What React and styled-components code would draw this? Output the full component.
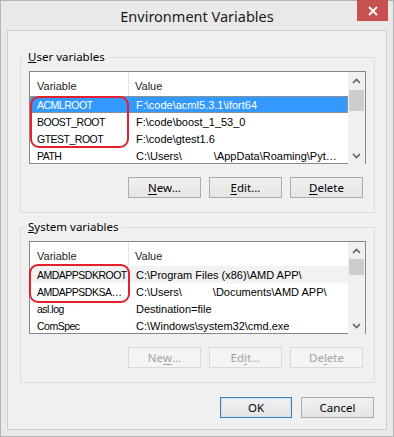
import React from "react";
import styled, { createGlobalStyle } from "styled-components";

const Global = createGlobalStyle`
  html, body { margin: 0; padding: 0; background: #fff; }
  * { box-sizing: border-box; }
`;

const uiFont = `"Noto Sans", "Open Sans", sans-serif`;
const listFont = `"Liberation Sans", Arial, sans-serif`;

const Window = styled.div`
  width: 394px;
  height: 437px;
  background: #e9e9e9;
  border: 1px solid #b4b4b4;
  display: flex;
  flex-direction: column;
  padding: 0 6px 6px 6px;
  font-family: ${uiFont};
`;

const TitleBar = styled.div`
  position: relative;
  height: 29px;
  flex: none;
  display: flex;
  align-items: center;
  justify-content: center;
  font-size: 14.5px;
  color: #1a1a1a;
  padding-top: 1px;
`;

const CloseButton = styled.div`
  position: absolute;
  top: -1px;
  right: -1px;
  width: 31px;
  height: 21px;
  background: #c75050;
  display: flex;
  align-items: center;
  justify-content: center;
`;

const Body = styled.div`
  flex: 1;
  background: #f0f0f0;
  border: 1px solid #cfcfcf;
  display: flex;
  flex-direction: column;
  padding: 18px 11px 11px 12px;
`;

const Group = styled.fieldset`
  margin: 0 0 6px 0;
  padding: 6px 8px 14px 8px;
  border: 1px solid #dcdcdc;
  min-width: 0;
`;

const Legend = styled.legend`
  font-size: 11.5px;
  color: #000;
  padding: 0 3px;
  margin-left: -4px;
  line-height: 16px;
`;

const ListBox = styled.div`
  position: relative;
  height: 93px;
  border: 1px solid #828790;
  background: #fff;
  display: grid;
  grid-template-columns: 1fr 17px;
  font-family: ${listFont};
  font-size: 11px;
  color: #000;
`;

const Rows = styled.div`
  display: flex;
  flex-direction: column;
  min-width: 0;
`;

const Header = styled.div`
  height: 24px;
  display: grid;
  grid-template-columns: 99px 1fr;
  flex: none;
`;

const HeadCell = styled.div`
  display: flex;
  align-items: center;
  padding-left: ${(p) => (p.$first ? 7 : 6)}px;
  border-right: ${(p) => (p.$first ? "1px solid #e5e5e5" : "none")};
  color: #1e1e1e;
  padding-top: 4px;
`;

const Row = styled.div`
  height: 17px;
  flex: none;
  display: grid;
  grid-template-columns: 99px 1fr;
  align-items: center;
  background: ${(p) => (p.$selected ? "#3399ff" : p.$hover ? "#f2f2f2" : "transparent")};
  color: ${(p) => (p.$selected ? "#fff" : "#000")};
  outline: ${(p) => (p.$selected ? "1px dotted #e08a3c" : "none")};
  outline-offset: -1px;
`;

const Cell = styled.div`
  padding-left: 7px;
  padding-right: ${(p) => (p.$name ? 1 : 6)}px;
  white-space: nowrap;
  overflow: hidden;
  text-overflow: ellipsis;
  font-size: ${(p) => (p.$name ? 10.5 : 11)}px;
  letter-spacing: ${(p) => (p.$name ? -0.5 : 0)}px;
`;

const Gap = styled.span`
  display: inline-block;
  width: ${(p) => p.$w}px;
`;

const ScrollBar = styled.div`
  background: #f0f0f0;
  display: flex;
  flex-direction: column;
  align-items: stretch;
`;

const Arrow = styled.div`
  height: 17px;
  flex: none;
  display: flex;
  align-items: center;
  justify-content: center;
`;

const Track = styled.div`
  flex: 1;
  display: flex;
  flex-direction: column;
  padding: ${(p) => p.$top}px 1px 0 1px;
`;

const Thumb = styled.div`
  height: ${(p) => p.$h}px;
  background: #cdcdcd;
`;

const Marker = styled.div`
  position: absolute;
  left: ${(p) => p.$x}px;
  top: ${(p) => p.$y}px;
  width: ${(p) => p.$w}px;
  height: ${(p) => p.$h}px;
  border: 2px solid #e3202d;
  border-radius: 9px;
  pointer-events: none;
`;

const ButtonRow = styled.div`
  display: flex;
  justify-content: flex-end;
  gap: 8px;
  margin-top: 13px;
  padding-right: 3px;
`;

const Button = styled.div`
  width: ${(p) => p.$w || 73}px;
  height: 21px;
  display: flex;
  align-items: center;
  justify-content: center;
  font-family: ${uiFont};
  font-size: 11.5px;
  color: ${(p) => (p.$disabled ? "#a3a3a3" : "#000")};
  border: 1px solid ${(p) => (p.$disabled ? "#d9d9d9" : p.$default ? "#3c7fb1" : "#acacac")};
  background: ${(p) =>
    p.$disabled ? "#f4f4f4" : "linear-gradient(#f0f0f0, #e5e5e5)"};
  box-shadow: ${(p) => (p.$default ? "inset 0 0 0 1px #cce4f7" : "none")};
  u { text-decoration-thickness: 1px; text-underline-offset: 2px; }
`;

const Footer = styled.div`
  margin-top: auto;
  display: flex;
  justify-content: flex-end;
  gap: 9px;
  padding-right: 1px;
`;

const Chevron = ({ up }) => (
  <svg width="9" height="6" viewBox="0 0 9 6">
    <polyline
      points={up ? "1,5 4.5,1.5 8,5" : "1,1 4.5,4.5 8,1"}
      fill="none"
      stroke="#606060"
      strokeWidth="1.6"
    />
  </svg>
);

const Scroll = ({ top, h }) => (
  <ScrollBar>
    <Arrow><Chevron up /></Arrow>
    <Track $top={top}><Thumb $h={h} /></Track>
    <Arrow><Chevron /></Arrow>
  </ScrollBar>
);

const userVars = [
  { name: "ACMLROOT", value: "F:\\code\\acml5.3.1\\ifort64", selected: true },
  { name: "BOOST_ROOT", value: "F:\\code\\boost_1_53_0" },
  { name: "GTEST_ROOT", value: "F:\\code\\gtest1.6" },
  { name: "PATH", value: "C:\\Users\\", rest: "\\AppData\\Roaming\\Python\\Scripts", gap: 32 },
];

const sysVars = [
  { name: "AMDAPPSDKROOT", value: "C:\\Program Files (x86)\\AMD APP\\", hover: true },
  { name: "AMDAPPSDKSAMPLESROOT", value: "C:\\Users\\", rest: "\\Documents\\AMD APP\\", gap: 31 },
  { name: "asl.log", value: "Destination=file" },
  { name: "ComSpec", value: "C:\\Windows\\system32\\cmd.exe" },
];

const VarList = ({ items, marker, top, h }) => (
  <ListBox>
    <Rows>
      <Header>
        <HeadCell $first>Variable</HeadCell>
        <HeadCell>Value</HeadCell>
      </Header>
      {items.map((it) => (
        <Row key={it.name} $selected={it.selected} $hover={it.hover}>
          <Cell $name>{it.name}</Cell>
          <Cell>
            {it.value}
            {it.rest && <Gap $w={it.gap} />}
            {it.rest}
          </Cell>
        </Row>
      ))}
    </Rows>
    <Scroll top={top} h={h} />
    <Marker {...marker} />
  </ListBox>
);

export default function App() {
  return (
    <>
      <Global />
      <Window>
        <TitleBar>
          Environment Variables
          <CloseButton>
            <svg width="10" height="10" viewBox="0 0 10 10">
              <path d="M1 1 L9 9 M9 1 L1 9" stroke="#fff" strokeWidth="1.8" />
            </svg>
          </CloseButton>
        </TitleBar>
        <Body>
          <Group>
            <Legend><u>U</u>ser variables</Legend>
            <VarList
              items={userVars}
              top={1}
              h={21}
              marker={{ $x: 0, $y: 24, $w: 99, $h: 52 }}
            />
            <ButtonRow>
              <Button><u>N</u>ew...</Button>
              <Button><u>E</u>dit...</Button>
              <Button><u>D</u>elete</Button>
            </ButtonRow>
          </Group>
          <Group>
            <Legend><u>S</u>ystem variables</Legend>
            <VarList
              items={sysVars}
              top={0}
              h={16}
              marker={{ $x: -1, $y: 22, $w: 101, $h: 39 }}
            />
            <ButtonRow>
              <Button $disabled>Ne<u>w</u>...</Button>
              <Button $disabled>Ed<u>i</u>t...</Button>
              <Button $disabled>De<u>l</u>ete</Button>
            </ButtonRow>
          </Group>
          <Footer>
            <Button $default $w={72}>OK</Button>
            <Button $w={73}>Cancel</Button>
          </Footer>
        </Body>
      </Window>
    </>
  );
}
